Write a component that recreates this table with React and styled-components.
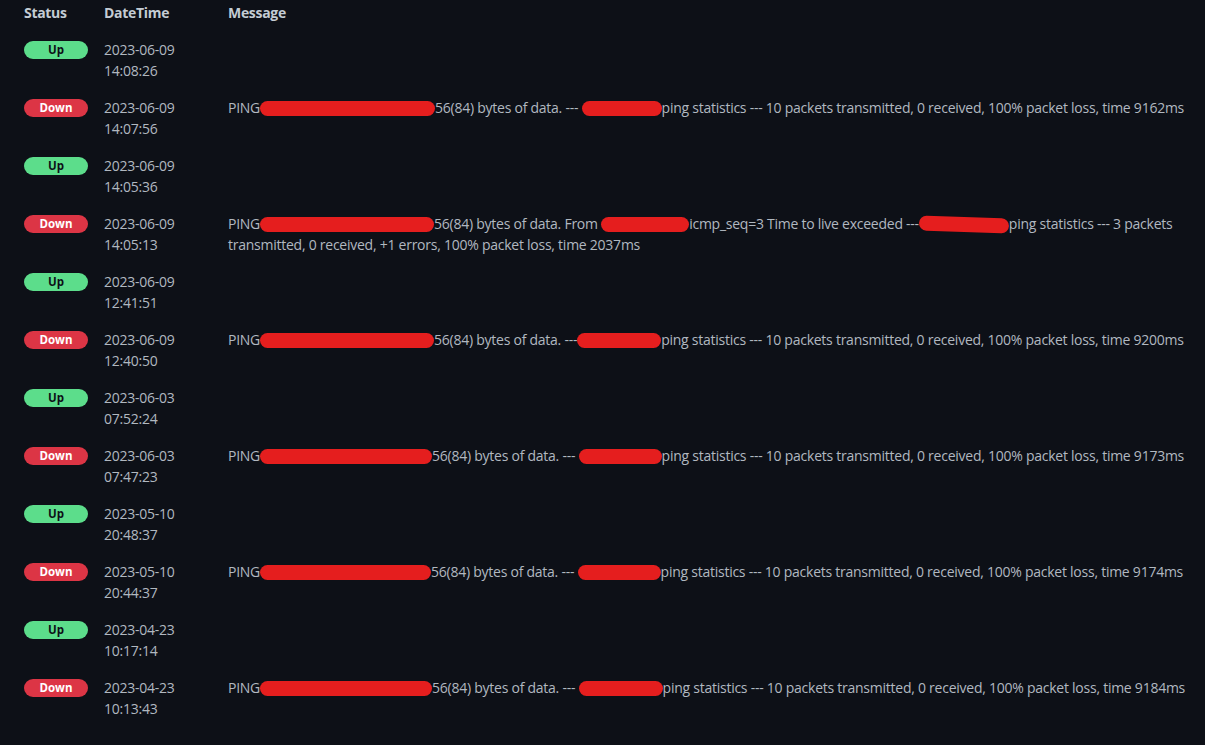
import React from "react";
import styled, { createGlobalStyle } from "styled-components";

const Global = createGlobalStyle`
  html, body { margin: 0; padding: 0; background: #0d1017; }
  body {
    font-family: "Open Sans", "Noto Sans", "Liberation Sans", sans-serif;
    font-size: 14px;
    color: #b1b8c0;
  }
`;

const Page = styled.div`
  min-height: 745px;
  background: #0d1017;
  padding: 0 6px 0 16px;
`;

const Table = styled.table`
  width: 100%;
  border-collapse: collapse;
  table-layout: fixed;
`;

const Th = styled.th`
  text-align: left;
  font-weight: 700;
  color: #c4ccd4;
  padding: 2px 8px 8px;
  line-height: 21px;
  letter-spacing: -0.3px;
  width: ${(p) => p.$w || "auto"};
`;

const Td = styled.td`
  padding: 8px;
  line-height: 21px;
  vertical-align: top;
  letter-spacing: -0.25px;
`;

const Badge = styled.span`
  display: inline-block;
  width: 64px;
  height: 18px;
  line-height: 18px;
  border-radius: 9px;
  text-align: center;
  font-size: 11.5px;
  font-weight: 700;
  letter-spacing: 0;
  vertical-align: middle;
  margin-top: -2px;
  background: ${(p) => (p.$up ? "#5cdd8b" : "#dc3545")};
  color: ${(p) => (p.$up ? "#0d1017" : "#ffffff")};
`;

const Redact = styled.span`
  display: inline-block;
  height: 15px;
  border-radius: 8px;
  background: #e51e1e;
  vertical-align: middle;
  margin-top: -2px;
  transform: rotate(${(p) => p.$rot || 0}deg);
`;

const rows = [
  { up: true, d: "2023-06-09", t: "14:08:26" },
  {
    up: false, d: "2023-06-09", t: "14:07:56",
    msg: ["PING", [175], "56(84) bytes of data. --- ", [80], "ping statistics --- 10 packets transmitted, 0 received, 100% packet loss, time 9162ms"],
  },
  { up: true, d: "2023-06-09", t: "14:05:36" },
  {
    up: false, d: "2023-06-09", t: "14:05:13",
    msg: ["PING", [174], "56(84) bytes of data. From ", [88], "icmp_seq=3 Time to live exceeded ---", [90, 2], "ping statistics --- 3 packets transmitted, 0 received, +1 errors, 100% packet loss, time 2037ms"],
  },
  { up: true, d: "2023-06-09", t: "12:41:51" },
  {
    up: false, d: "2023-06-09", t: "12:40:50",
    msg: ["PING", [174], "56(84) bytes of data. ---", [84], "ping statistics --- 10 packets transmitted, 0 received, 100% packet loss, time 9200ms"],
  },
  { up: true, d: "2023-06-03", t: "07:52:24" },
  {
    up: false, d: "2023-06-03", t: "07:47:23",
    msg: ["PING", [172], "56(84) bytes of data. --- ", [83], "ping statistics --- 10 packets transmitted, 0 received, 100% packet loss, time 9173ms"],
  },
  { up: true, d: "2023-05-10", t: "20:48:37" },
  {
    up: false, d: "2023-05-10", t: "20:44:37",
    msg: ["PING", [171], "56(84) bytes of data. --- ", [83], "ping statistics --- 10 packets transmitted, 0 received, 100% packet loss, time 9174ms"],
  },
  { up: true, d: "2023-04-23", t: "10:17:14" },
  {
    up: false, d: "2023-04-23", t: "10:13:43",
    msg: ["PING", [172], "56(84) bytes of data. --- ", [84], "ping statistics --- 10 packets transmitted, 0 received, 100% packet loss, time 9184ms"],
  },
];

function Message({ parts }) {
  if (!parts) return null;
  return parts.map((p, i) =>
    Array.isArray(p) ? (
      <Redact key={i} $rot={p[1]} style={{ width: p[0] }} />
    ) : (
      <React.Fragment key={i}>{p}</React.Fragment>
    )
  );
}

export default function App() {
  return (
    <Page>
      <Global />
      <Table>
        <thead>
          <tr>
            <Th $w="64px">Status</Th>
            <Th $w="108px">DateTime</Th>
            <Th>Message</Th>
          </tr>
        </thead>
        <tbody>
          {rows.map((r, i) => (
            <tr key={i}>
              <Td>
                <Badge $up={r.up}>{r.up ? "Up" : "Down"}</Badge>
              </Td>
              <Td>
                {r.d}
                <br />
                {r.t}
              </Td>
              <Td>
                <Message parts={r.msg} />
              </Td>
            </tr>
          ))}
        </tbody>
      </Table>
    </Page>
  );
}
